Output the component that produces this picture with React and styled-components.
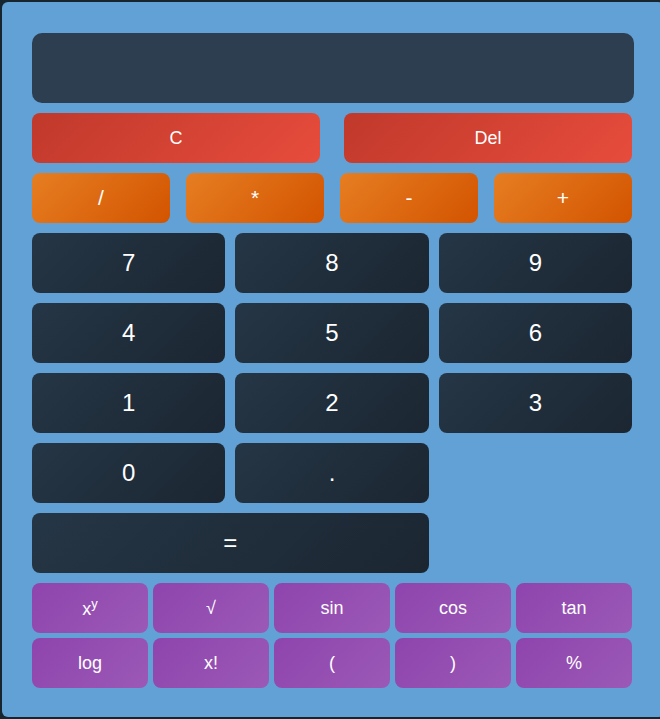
import React from "react";
import styled, { createGlobalStyle, css } from "styled-components";

const GlobalStyle = createGlobalStyle`
  html, body {
    margin: 0;
    padding: 0;
    background: #17252f;
    overflow: hidden;
  }
  body {
    font-family: "Liberation Sans", Arial, sans-serif;
  }
`;

const Page = styled.div`
  padding: 2px 0 0 2px;
  width: 680px;
`;

const Panel = styled.div`
  width: 602px;
  padding: 31px 30px 29px 30px;
  background: #62a1d6;
  border-radius: 6px;
  display: flex;
  flex-direction: column;
  gap: 10px;
`;

const Display = styled.div`
  height: 70px;
  background: #2c3e50;
  border-radius: 10px;
  width: 602px;
`;

const Row = styled.div`
  display: grid;
  grid-template-columns: repeat(${({ $cols }) => $cols}, 1fr);
  gap: ${({ $gap }) => $gap}px;
  width: 600px;
`;

const variants = {
  clear: css`
    background: linear-gradient(135deg, #c0392b, #e74c3c);
    font-size: 18px;
    height: 50px;
  `,
  op: css`
    background: linear-gradient(135deg, #e67e22, #d35400);
    font-size: 21px;
    height: 50px;
  `,
  num: css`
    background: linear-gradient(135deg, #253646, #1b2631);
    font-size: 24px;
    height: 60px;
  `,
  fn: css`
    background: linear-gradient(135deg, #8e44ad, #9b59b6);
    font-size: 18px;
    height: 50px;
  `,
};

const Key = styled.button`
  border: 0;
  border-radius: 8px;
  color: #ffffff;
  font-family: "Liberation Sans", Arial, sans-serif;
  padding: 0;
  cursor: pointer;
  grid-column: span ${({ $span }) => $span || 1};
  ${({ $kind }) => variants[$kind]}
`;

const Stack = styled.div`
  display: flex;
  flex-direction: column;
  gap: 5px;
`;

const Sup = styled.sup`
  font-size: 13px;
`;

export default function App() {
  const nums = ["7", "8", "9", "4", "5", "6", "1", "2", "3", "0", "."];
  return (
    <Page>
      <GlobalStyle />
      <Panel>
        <Display />
        <Row $cols={2} $gap={24}>
          <Key $kind="clear">C</Key>
          <Key $kind="clear">Del</Key>
        </Row>
        <Row $cols={4} $gap={16}>
          {["/", "*", "-", "+"].map((o) => (
            <Key key={o} $kind="op">
              {o}
            </Key>
          ))}
        </Row>
        <Row $cols={3} $gap={10}>
          {nums.map((n) => (
            <Key key={n} $kind="num">
              {n}
            </Key>
          ))}
          <span />
          <Key $kind="num" $span={2}>
            =
          </Key>
        </Row>
        <Stack>
          <Row $cols={5} $gap={5}>
            <Key $kind="fn">
              x<Sup>y</Sup>
            </Key>
            <Key $kind="fn">√</Key>
            <Key $kind="fn">sin</Key>
            <Key $kind="fn">cos</Key>
            <Key $kind="fn">tan</Key>
          </Row>
          <Row $cols={5} $gap={5}>
            {["log", "x!", "(", ")", "%"].map((f) => (
              <Key key={f} $kind="fn">
                {f}
              </Key>
            ))}
          </Row>
        </Stack>
      </Panel>
    </Page>
  );
}
